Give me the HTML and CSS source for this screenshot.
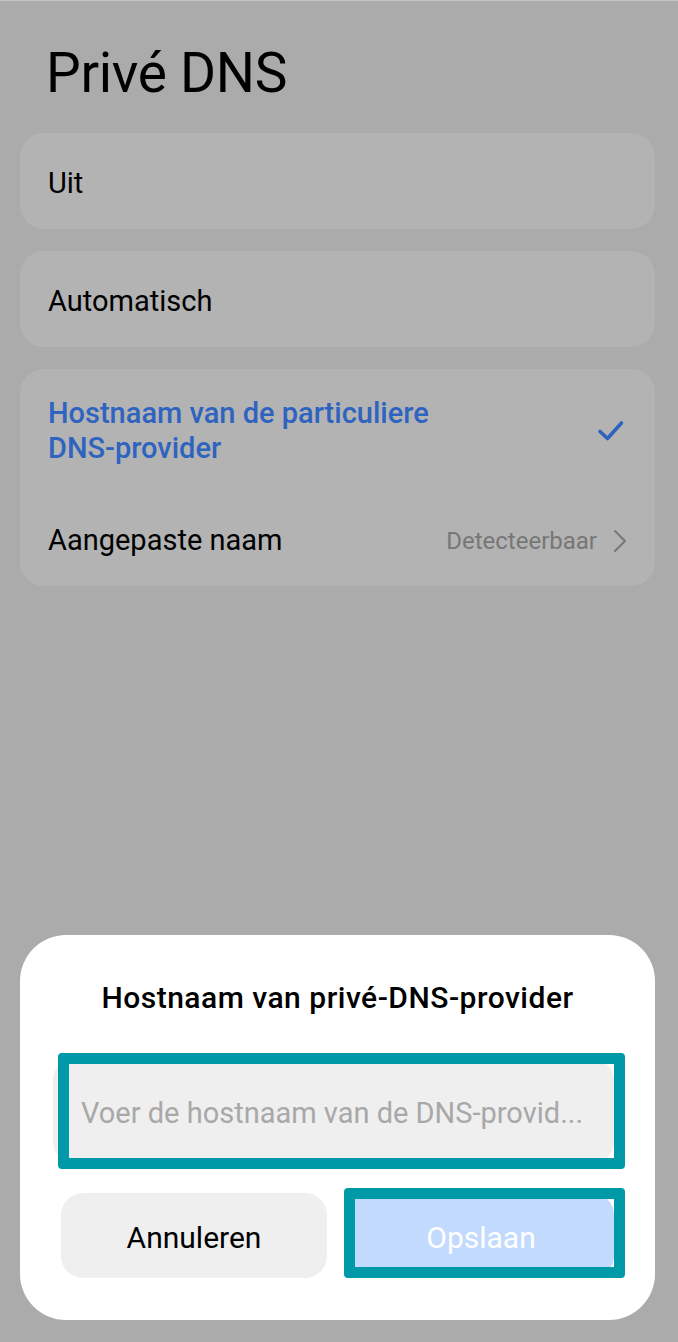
FILE: index.html
```html
<!doctype html>
<html>
<head>
    <meta charset="utf-8">
    <title>Privé DNS</title>
    <link rel="stylesheet" href="styles.css">
</head>
<body>
    <div class="page">
        <h1 class="pageTitle">Privé DNS</h1>

        <!-- keuzes -->
        <div class="card">
            <div class="item">Uit</div>
        </div>
        <div class="card">
            <div class="item">Automatisch</div>
        </div>
        <div class="card cardGroup">
            <div class="row">
                <div class="rowText active">Hostnaam van de particuliere<br>DNS-provider</div>
                <svg class="check" width="28" height="24" viewBox="0 0 28 24">
                    <path d="M3 12.5 L10.5 19.5 L24.5 4" fill="none" stroke="#2f63c0" stroke-width="3.6" stroke-linecap="round" stroke-linejoin="round"/>
                </svg>
            </div>
            <div class="row rowSub">
                <div class="rowText">Aangepaste naam</div>
                <div class="rowValue">
                    <span>Detecteerbaar</span>
                    <svg width="14" height="24" viewBox="0 0 14 24">
                        <path d="M2 2 L12 12 L2 22" fill="none" stroke="#777" stroke-width="2" stroke-linecap="round" stroke-linejoin="round"/>
                    </svg>
                </div>
            </div>
        </div>

        <!-- dialoog onderaan -->
        <div class="dialog">
            <div class="dialogTitle">Hostnaam van privé-DNS-provider</div>
            <div class="inputBox">
                <span class="placeholder">Voer de hostnaam van de DNS-provid...</span>
                <span class="mark markInput"></span>
            </div>
            <div class="btns">
                <div class="btn btnCancel">Annuleren</div>
                <div class="btn btnSave">
                    Opslaan
                    <span class="mark markSave"></span>
                </div>
            </div>
        </div>
    </div>
</body>
</html>
```

FILE: styles.css
```css
*{margin: 0;padding: 0;box-sizing: border-box;}
body{background: #ababab;font-family: Roboto, "Noto Sans", "Liberation Sans", sans-serif;color: #000;}

.page{
    min-height: 1342px;display: flex;flex-direction: column;
    padding: 0 23px 22px 20px;border-top: 1px solid #c4c4c4;
}
.pageTitle{
    font-size: 55px;font-weight: 400;line-height: 64px;
    margin: 40px 0 28px 26px;letter-spacing: -0.3px;
}

.card{background: #b3b3b3;border-radius: 24px;margin-bottom: 22px;}
.item{height: 96px;display: flex;align-items: center;padding: 3px 28px 0 28px;font-size: 29px;}

.cardGroup{padding: 27px 28px 28px 28px;}
.row{display: flex;align-items: center;justify-content: space-between;}
.rowText{font-size: 29px;line-height: 35px;}
.rowText.active{color: #2f63c0;font-weight: 500;}
.check{margin-right: 2px;}
.rowSub{margin-top: 57px;}
.rowValue{display: flex;align-items: center;gap: 16px;color: #777;font-size: 24px;}

.dialog{
    margin-top: auto;background: #fff;border-radius: 46px;
    padding: 44px 41px 42px 41px;
}
.dialogTitle{text-align: center;font-size: 30px;line-height: 38px;font-weight: 500;letter-spacing: 0.5px;}
.inputBox{
    position: relative;margin: 43px 0 0 -8px;height: 102px;
    background: #efefef;border-radius: 20px;
    display: flex;align-items: center;padding: 4px 28px 0 28px;
}
.placeholder{font-size: 29px;color: #a8a8a8;white-space: nowrap;}

.btns{display: flex;gap: 21px;margin-top: 31px;}
.btn{
    flex: 1;height: 85px;border-radius: 22px;position: relative;
    display: flex;align-items: center;justify-content: center;font-size: 30px;
    padding-top: 4px;
}
.btnCancel{background: #efefef;}
.btnSave{background: #c2dafe;color: #fff;}

/* turquoise markering over de velden */
.mark{position: absolute;border: 11px solid #0099a8;border-radius: 4px;pointer-events: none;}
.markInput{top: -7px;left: 5px;right: -11px;bottom: -7px;}
.markSave{top: -5px;left: -4px;right: -11px;bottom: 0;}
```
